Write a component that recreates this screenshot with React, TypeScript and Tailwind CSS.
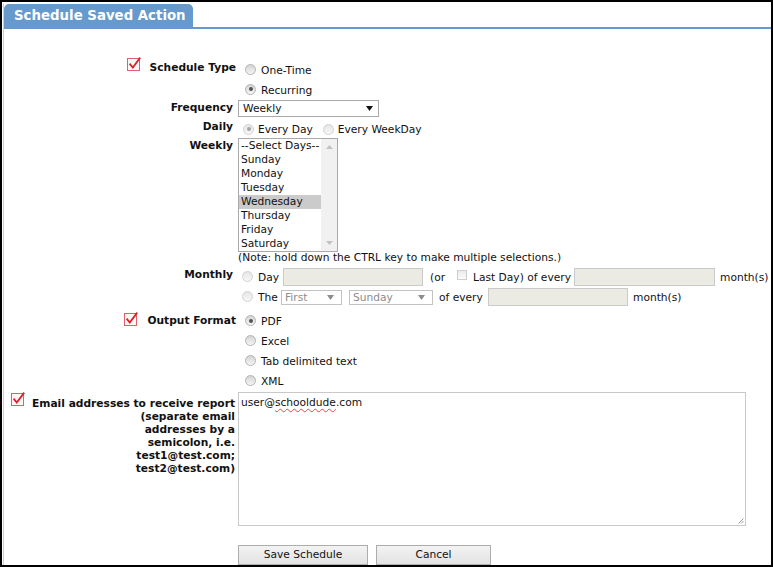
import React from "react";

function Radio({ checked = false, disabled = false, className = "" }: { checked?: boolean; disabled?: boolean; className?: string }) {
  return (
    <span
      className={`relative inline-block shrink-0 w-[11px] h-[11px] rounded-full border ${
        disabled ? "border-[#d2d2d2] bg-gradient-to-b from-[#e6e6e6] to-[#f7f7f7]" : "border-[#b3b3b3] bg-gradient-to-b from-[#d4d4d4] to-[#f6f6f6]"
      } ${className}`}
    >
      {checked && (
        <span
          className={`absolute left-[2.5px] top-[2.5px] w-[4px] h-[4px] rounded-full ${disabled ? "bg-[#a6a6a6]" : "bg-[#555555]"}`}
        />
      )}
    </span>
  );
}

function CheckIcon({ className = "" }: { className?: string }) {
  return (
    <svg width="14" height="14" viewBox="0 0 14 14" className={`shrink-0 ${className}`}>
      <rect x="0.5" y="1.5" width="12" height="12" fill="#fff6f6" stroke="#e0606a" strokeWidth="1" />
      <path d="M2.6 6.6 L5.8 10.6 L13.2 0.6" fill="none" stroke="#d8232e" strokeWidth="1.8" />
    </svg>
  );
}

function Tri({ color = "#111", className = "" }: { color?: string; className?: string }) {
  return (
    <svg width="7" height="5" viewBox="0 0 7 5" className={`shrink-0 ${className}`}>
      <path d="M0 0 L7 0 L3.5 5 Z" fill={color} />
    </svg>
  );
}

function DisabledSelect({ text, className = "" }: { text: string; className?: string }) {
  return (
    <div
      className={`h-[15px] border border-[#c3c3c3] bg-white flex items-center justify-between pl-[3px] pr-[7px] text-[#8c8c8c] ${className}`}
    >
      <span>{text}</span>
      <Tri color="#8c8c8c" />
    </div>
  );
}

const days = ["--Select Days--", "Sunday", "Monday", "Tuesday", "Wednesday", "Thursday", "Friday", "Saturday"];

export default function App() {
  return (
    <div className="w-[773px] h-[567px] overflow-hidden bg-white border-2 border-black font-['DejaVu_Sans',Verdana,sans-serif] text-[10.67px] leading-[13px] text-[#111111]">
      <div className="h-full ml-[1px] border-l border-[#cfcfcf]">
        {/* header tab */}
        <div className="mt-[2px] flex items-end border-b-2 border-[#6699cc]">
          <div className="w-[189px] h-[23px] rounded-t-[5px] bg-[#6699cc] pl-[10px] text-white font-bold text-[13.33px] leading-[23px] whitespace-nowrap">
            Schedule Saved Action
          </div>
        </div>

        {/* Schedule Type */}
        <div className="mt-[31px] flex items-start">
          <div className="w-[232px] flex justify-end items-start">
            <CheckIcon className="mt-[-3px] mr-[9px]" />
            <span className="font-bold mt-[1px]">Schedule Type</span>
          </div>
          <div className="ml-[2px] flex flex-col">
            <div className="h-[20px] flex items-center">
              <Radio className="ml-[7px] mb-[2px]" />
              <span className="ml-[5px]">One-Time</span>
            </div>
            <div className="h-[20px] flex items-center">
              <Radio checked className="ml-[7px] mb-[2px]" />
              <span className="ml-[5px]">Recurring</span>
            </div>
          </div>
        </div>

        {/* Frequency */}
        <div className="flex items-start">
          <div className="w-[232px] text-right pr-[3px] font-bold mt-[1px]">Frequency</div>
          <div className="ml-[2px] w-[141px] h-[17px] border border-[#a9a9a9] flex items-center justify-between pl-[4px] pr-[5px]">
            <span>Weekly</span>
            <Tri color="#111" />
          </div>
        </div>

        {/* Daily */}
        <div className="mt-[3px] flex items-start">
          <div className="w-[232px] text-right pr-[3px] font-bold">Daily</div>
          <div className="ml-[2px] h-[19px] flex items-center">
            <Radio checked disabled className="ml-[5px] mb-[1px]" />
            <span className="ml-[4px]">Every Day</span>
            <Radio disabled className="ml-[10px] mb-[1px]" />
            <span className="ml-[4px]">Every WeekDay</span>
          </div>
        </div>

        {/* Weekly */}
        <div className="-mt-[1px] flex items-start">
          <div className="w-[232px] text-right pr-[3px] font-bold mt-[1px]">Weekly</div>
          <div className="ml-[2px] w-[100px] h-[114px] border border-[#a9a9a9] flex">
            <div className="flex-1 flex flex-col">
              {days.map((d) => (
                <div
                  key={d}
                  className={`h-[14px] leading-[14px] pl-[2px] whitespace-nowrap ${d === "Wednesday" ? "bg-[#cbcbcb]" : ""}`}
                >
                  {d}
                </div>
              ))}
            </div>
            <div className="w-[16px] bg-[#f1f1f1] flex flex-col justify-between items-center py-[6px]">
              <svg width="7" height="4" viewBox="0 0 7 4">
                <path d="M0 4 L7 4 L3.5 0 Z" fill="#c2c2c2" />
              </svg>
              <svg width="7" height="4" viewBox="0 0 7 4">
                <path d="M0 0 L7 0 L3.5 4 Z" fill="#c2c2c2" />
              </svg>
            </div>
          </div>
        </div>
        <div className="pl-[234px] -mt-[1px] whitespace-nowrap">
          (Note: hold down the CTRL key to make multiple selections.)
        </div>

        {/* Monthly */}
        <div className="mt-[4px] flex items-start">
          <div className="w-[232px] text-right pr-[3px] font-bold">Monthly</div>
          <div className="ml-[2px] h-[18px] flex items-center whitespace-nowrap">
            <Radio disabled className="ml-[4px] mb-[2px]" />
            <span className="ml-[5px] w-[25px]">Day</span>
            <div className="w-[140px] h-[18px] bg-[#ebebe4] border border-[#cacaca]" />
            <span className="ml-[7px] w-[27px]">(or</span>
            <span className="self-start mt-[2px] w-[10px] h-[10px] border border-[#cfcfcf] bg-gradient-to-b from-[#ececec] to-[#fafafa]" />
            <span className="ml-[6px] w-[101px]">Last Day) of every</span>
            <div className="w-[141px] h-[18px] bg-[#ebebe4] border border-[#cacaca]" />
            <span className="ml-[5px]">month(s)</span>
          </div>
        </div>
        <div className="mt-[2px] flex items-start">
          <div className="w-[232px]" />
          <div className="ml-[2px] h-[18px] flex items-center whitespace-nowrap">
            <Radio disabled className="ml-[4px] mb-[2px]" />
            <span className="ml-[5px] w-[23px]">The</span>
            <DisabledSelect text="First" className="w-[61px]" />
            <DisabledSelect text="Sunday" className="ml-[7px] w-[84px]" />
            <span className="ml-[6px] w-[49px]">of every</span>
            <div className="w-[140px] h-[18px] bg-[#ebebe4] border border-[#cacaca]" />
            <span className="ml-[5px]">month(s)</span>
          </div>
        </div>

        {/* Output Format */}
        <div className="mt-[5px] flex items-start">
          <div className="w-[232px] flex justify-end items-start">
            <CheckIcon className="mt-[1px] mr-[9px]" />
            <span className="font-bold mt-[3px]">Output Format</span>
          </div>
          <div className="ml-[2px] flex flex-col">
            {[
              { t: "PDF", c: true },
              { t: "Excel", c: false },
              { t: "Tab delimited text", c: false },
              { t: "XML", c: false },
            ].map((o) => (
              <div key={o.t} className="h-[20px] flex items-center">
                <Radio checked={o.c} className="ml-[7px] mb-[1px]" />
                <span className="ml-[5px]">{o.t}</span>
              </div>
            ))}
          </div>
        </div>

        {/* Email */}
        <div className="mt-[1px] flex items-start">
          <div className="w-[232px] flex items-start">
            <CheckIcon className="ml-[7px] mt-[0px]" />
            <div className="flex-1 text-right font-bold mt-[5px] pr-[1px] whitespace-nowrap">
              Email addresses to receive report
              <br />
              (separate email
              <br />
              addresses by a
              <br />
              semicolon, i.e.
              <br />
              test1@test.com;
              <br />
              test2@test.com)
            </div>
          </div>
          <div className="relative ml-[2px] w-[508px] h-[134px] border border-[#c9c9c9] pl-[2px] pt-[3px]">
            user@
            <span className="underline decoration-wavy decoration-[#e04848] decoration-1 underline-offset-2">schooldude</span>
            .com
            <svg width="6" height="6" viewBox="0 0 6 6" className="absolute right-[1px] bottom-[1px]">
              <path d="M5.5 0.5 L0.5 5.5 M5.5 3 L3 5.5" stroke="#9a9a9a" strokeWidth="1" />
            </svg>
          </div>
        </div>

        {/* Buttons */}
        <div className="mt-[19px] pl-[234px] flex gap-[8px]">
          <button className="w-[130px] h-[20px] border border-[#adadad] bg-gradient-to-b from-[#f3f3f3] to-[#e3e3e3] text-[#111111] leading-[18px]">
            Save Schedule
          </button>
          <button className="w-[115px] h-[20px] border border-[#adadad] bg-gradient-to-b from-[#f3f3f3] to-[#e3e3e3] text-[#111111] leading-[18px]">
            Cancel
          </button>
        </div>
      </div>
    </div>
  );
}
